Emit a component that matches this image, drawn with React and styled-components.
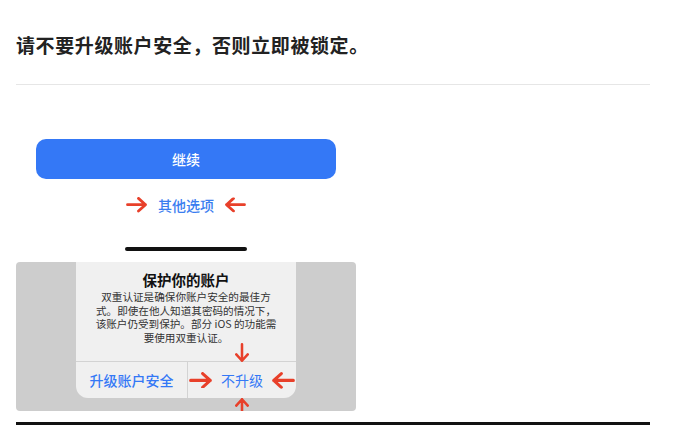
import React from "react";
import styled, { createGlobalStyle } from "styled-components";

const GlobalStyle = createGlobalStyle`
  html, body {
    margin: 0;
    padding: 0;
    background: #ffffff;
  }
  body {
    font-family: "Noto Sans CJK SC", "Noto Sans", "Liberation Sans", sans-serif;
  }
`;

const Arrow = ({ dir = "right", size = 22 }) => {
  const rot = { right: 0, left: 180, down: 90, up: -90 }[dir];
  return (
    <svg
      width={size}
      height={size * 0.7}
      viewBox="0 0 22 15"
      style={{ transform: `rotate(${rot}deg)` }}
    >
      <path
        d="M1.5 7.5 H19.5 M12.5 1.2 L19.5 7.5 L12.5 13.8"
        fill="none"
        stroke="#e8402a"
        strokeWidth="2.8"
        strokeLinecap="round"
        strokeLinejoin="round"
      />
    </svg>
  );
};

const App = () => {
  return (
    <Page>
      <GlobalStyle />
      <Title>请不要升级账户安全，否则立即被锁定。</Title>
      <Divider />
      <Figure>
        <PhoneTop>
          <ContinueButton>继续</ContinueButton>
          <OptionsRow>
            <Arrow dir="right" />
            <OptionsLink>其他选项</OptionsLink>
            <Arrow dir="left" />
          </OptionsRow>
          <HomeBar />
        </PhoneTop>
        <Shot>
          <Dialog>
            <DialogTitle>保护你的账户</DialogTitle>
            <DialogBody>
              双重认证是确保你账户安全的最佳方
              <br />
              式。即使在他人知道其密码的情况下，
              <br />
              该账户仍受到保护。部分 iOS 的功能需
              <br />
              要使用双重认证。
            </DialogBody>
            <Actions>
              <Action>
                <ActionText $strong>升级账户安全</ActionText>
              </Action>
              <Action $split>
                <Arrow dir="right" size={24} />
                <ActionText>不升级</ActionText>
                <Arrow dir="left" size={24} />
                <DownMark>
                  <Arrow dir="down" size={20} />
                </DownMark>
                <UpMark>
                  <Arrow dir="up" size={20} />
                </UpMark>
              </Action>
            </Actions>
          </Dialog>
        </Shot>
      </Figure>
      <BottomRule />
    </Page>
  );
};

export default App;

const Page = styled.div`
  padding: 31px 44px 0 16px;
  height: 425px;
  box-sizing: border-box;
  overflow: hidden;
`;

const Title = styled.h2`
  margin: 0;
  font-size: 19px;
  letter-spacing: 0.6px;
  line-height: 27px;
  font-weight: 700;
  color: #222222;
  text-spacing-trim: space-all;
`;

const Divider = styled.div`
  margin-top: 26px;
  height: 1px;
  background: #e6e6e6;
`;

const Figure = styled.div`
  width: 340px;
`;

const PhoneTop = styled.div`
  display: flex;
  flex-direction: column;
  align-items: center;
  padding-top: 54px;
  height: 177px;
  box-sizing: border-box;
`;

const ContinueButton = styled.div`
  width: 300px;
  height: 40px;
  border-radius: 10px;
  background: #3478f6;
  color: #ffffff;
  font-size: 14px;
  font-weight: 500;
  display: flex;
  align-items: center;
  justify-content: center;
`;

const OptionsRow = styled.div`
  margin-top: 16px;
  height: 20px;
  display: flex;
  align-items: center;
  gap: 10px;
`;

const OptionsLink = styled.span`
  color: #3a7df0;
  font-size: 14px;
  font-weight: 500;
  line-height: 20px;
`;

const HomeBar = styled.div`
  margin-top: 32px;
  width: 122px;
  height: 4px;
  border-radius: 2px;
  background: #111111;
`;

const Shot = styled.div`
  height: 149px;
  background: #cdcdcd;
  border-radius: 4px;
  display: flex;
  justify-content: center;
  overflow: hidden;
`;

const Dialog = styled.div`
  width: 220px;
  height: 136px;
  background: #f0f0f0;
  border-radius: 0 0 12px 12px;
  display: flex;
  flex-direction: column;
  align-items: center;
  padding-top: 8px;
  box-sizing: border-box;
`;

const DialogTitle = styled.div`
  font-size: 14.5px;
  font-weight: 700;
  line-height: 20px;
  color: #111111;
`;

const DialogBody = styled.div`
  margin-top: 0;
  font-size: 10.6px;
  line-height: 13.5px;
  color: #333333;
  text-align: center;
  white-space: nowrap;
`;

const Actions = styled.div`
  margin-top: auto;
  width: 100%;
  height: 36px;
  border-top: 1px solid #d3d3d3;
  display: grid;
  grid-template-columns: 111px 1fr;
`;

const Action = styled.div`
  position: relative;
  display: flex;
  align-items: center;
  justify-content: center;
  gap: 8px;
  border-left: ${(p) => (p.$split ? "1px solid #d3d3d3" : "none")};
`;

const ActionText = styled.span`
  color: #3478f6;
  font-size: 14px;
  font-weight: ${(p) => (p.$strong ? 500 : 400)};
  line-height: 20px;
`;

const DownMark = styled.div`
  position: absolute;
  left: 50%;
  top: -16px;
  transform: translateX(-50%);
  display: flex;
`;

const UpMark = styled.div`
  position: absolute;
  left: 50%;
  bottom: -16px;
  transform: translateX(-50%);
  display: flex;
`;

const BottomRule = styled.div`
  margin-top: 11px;
  height: 3px;
  background: #111111;
`;
